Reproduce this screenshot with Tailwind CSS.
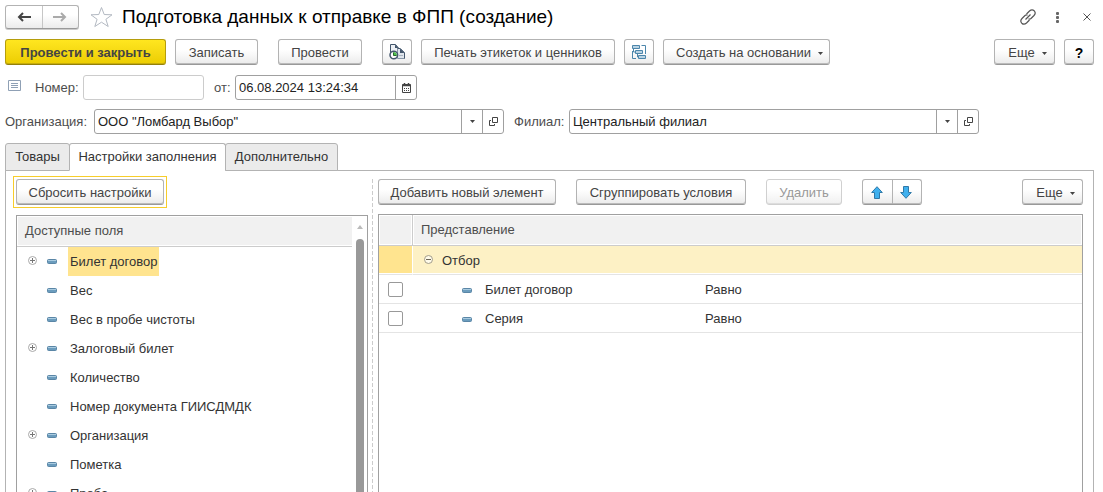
<!DOCTYPE html>
<html lang="ru">
<head>
<meta charset="utf-8">
<title>Подготовка данных к отправке в ФПП (создание)</title>
<script src="https://cdn.jsdelivr.net/npm/@tailwindcss/browser@4"></script>
</head>
<body class="flex h-screen flex-col overflow-hidden bg-white font-['Liberation_Sans',Arial,sans-serif] text-[13px] leading-4 text-[#333]">
<svg class="hidden">
  <defs>
    <symbol id="field" viewBox="0 0 10 5"><rect x=".5" y=".5" width="9" height="4" rx="1" fill="#6b9cbd" stroke="#5a86a6"/><path d="M1 1.500H9" stroke="#a9cbe0"/></symbol>
    <symbol id="plus" viewBox="0 0 9 9"><circle cx="4.500" cy="4.500" r="4" fill="#fff" stroke="#a8a8a8"/><path d="M2 4.500H7M4.500 2V7" stroke="#777"/></symbol>
    <symbol id="minus" viewBox="0 0 9 9"><circle cx="4.500" cy="4.500" r="4" fill="#fffbea" stroke="#a39d8a"/><path d="M2 4.500H7" stroke="#6b6657"/></symbol>
    <symbol id="caret" viewBox="0 0 5 3"><path d="M0 0H5L2.500 3Z" fill="#444"/></symbol>
    <symbol id="open" viewBox="0 0 9 9"><path d="M3.500.5H8.500V5.500H3.500ZM2 3.500H.5V8.500H5.500V7" fill="none" stroke="#444"/></symbol>
  </defs>
</svg>

<header class="flex items-center pt-[5px] pr-3 pl-[5px]">
  <div class="flex h-6 w-[74px] rounded-[3px] border border-[#b3b3b3] border-b-[#999] bg-linear-to-b from-white from-40% to-[#ebebeb] shadow-[0_1px_0_#ccc]">
    <button aria-label="Назад" class="flex flex-1 items-center justify-center border-r border-[#c6c6c6]"><svg width="14" height="10" viewBox="0 0 14 10"><path d="M14 5H2M6 1L2 5L6 9" fill="none" stroke="#444" stroke-width="2"/></svg></button>
    <button aria-label="Вперед" class="flex flex-1 items-center justify-center"><svg width="14" height="10" viewBox="0 0 14 10"><path d="M0 5H12M8 1L12 5L8 9" fill="none" stroke="#aaa" stroke-width="2"/></svg></button>
  </div>
  <button aria-label="Избранное" class="ml-[11px]"><svg width="23" height="22" viewBox="0 0 23 22"><path d="M11.500 1.500L14.200 8.500L22 8.800L15.900 13.300L18.200 20.500L11.500 16.200L4.800 20.500L7.100 13.300L1 8.800L8.800 8.500Z" fill="#fff" stroke="#b3b9c2"/></svg></button>
  <h1 class="ml-[9px] flex-1 text-[19px] leading-6 text-black">Подготовка данных к отправке в ФПП (создание)</h1>
  <button aria-label="Ссылка" class="mr-5"><svg width="16" height="16" viewBox="0 0 16 16"><g fill="none" stroke="#555" stroke-width="1.200"><path d="M6.500 5L9.500 2Q12 -.3 14.200 1.800Q16.300 4 14 6.500L11 9.500Q9.800 10.500 8.500 9.800"/><path d="M9.500 11L6.500 14Q4 16.300 1.800 14.200Q-.3 12 2 9.500L5 6.500Q6.200 5.500 7.500 6.200"/><path d="M5.500 10.500L10.500 5.500"/></g></svg></button>
  <button aria-label="Меню" class="mr-6"><svg width="3" height="11" viewBox="0 0 3 11" fill="#666"><rect width="3" height="3" rx="1"/><rect y="4" width="3" height="3" rx="1"/><rect y="8" width="3" height="3" rx="1"/></svg></button>
  <button aria-label="Закрыть"><svg width="8" height="8" viewBox="0 0 8 8"><path d="M.5.5L7.500 7.500M7.500.5L.5 7.500" stroke="#555" fill="none"/></svg></button>
</header>

<div class="mt-[10px] flex h-[26px] shrink-0 pr-[9px] pl-[5px] text-[#444]">
  <button class="w-[161px] rounded-[3px] border border-[#b59d0c] border-b-[#94800a] bg-linear-to-b from-[#ffe61f] to-[#eccd00] pt-0.5 font-bold shadow-[inset_0_-1px_0_#c7ad0a]">Провести и закрыть</button>
  <button class="ml-[9px] w-[83px] rounded-[3px] border border-[#b3b3b3] border-b-[#999] bg-linear-to-b from-white from-40% to-[#ebebeb] pt-0.5 shadow-[inset_0_-1px_0_#bbb]">Записать</button>
  <button class="ml-5 w-[84px] rounded-[3px] border border-[#b3b3b3] border-b-[#999] bg-linear-to-b from-white from-40% to-[#ebebeb] pt-0.5 shadow-[inset_0_-1px_0_#bbb]">Провести</button>
  <button aria-label="Движения документа" class="ml-5 flex w-[30px] items-center justify-center rounded-[3px] border border-[#b3b3b3] border-b-[#999] bg-linear-to-b from-white from-40% to-[#ebebeb] shadow-[inset_0_-1px_0_#bbb]"><svg width="17" height="16" viewBox="0 0 17 16"><path d="M1.500 11V.5H6.500L9.500 4V12H1.500Z" fill="#eef1f5" stroke="#43566c"/><path d="M6 .5V4H9.500Z" fill="#43566c"/><path d="M8.500 14.500V4.500H11.500L15.500 8.500V14.500Z" fill="#dfe5ec" stroke="#8796a8"/><path d="M8.500 4.500H11L15.500 9V14.500" fill="none" stroke="#43566c"/><path d="M11 4.500V9H15.500Z" fill="#43566c"/><path d="M10 11.500H14" stroke="#a9b4c1"/><circle cx="4.800" cy="11" r="3.800" fill="#fff" stroke="#43566c" stroke-width="1.500"/><path d="M4.500 8V11.500H8A3.300 3.300 0 0 0 4.500 8Z" fill="#4fc04d"/><path d="M4.500 8.500V11.500H7.500" fill="none" stroke="#266b2c"/></svg></button>
  <button class="ml-[9px] w-[194px] rounded-[3px] border border-[#b3b3b3] border-b-[#999] bg-linear-to-b from-white from-40% to-[#ebebeb] pt-0.5 shadow-[inset_0_-1px_0_#bbb]">Печать этикеток и ценников</button>
  <button aria-label="Структура подчиненности" class="ml-[9px] flex w-[30px] items-center justify-center rounded-[3px] border border-[#b3b3b3] border-b-[#999] bg-linear-to-b from-white from-40% to-[#ebebeb] shadow-[inset_0_-1px_0_#bbb]"><svg width="15" height="15" viewBox="0 0 15 15" fill="none" stroke="#4c86ab"><path d="M.5.5H7.500V3.500H.5ZM3.500 5.500H10.500V8.500H3.500ZM6.500 10.500H13.500V13.500H6.500Z" fill="#b9d3e3"/><path d="M1.500 3.500V7H3.500M5.500 8.500V12H6.500M9.500.5H13.500V9M.5 6V13.500H4"/></svg></button>
  <button class="ml-[9px] flex w-[167px] items-center justify-center gap-[7px] rounded-[3px] border border-[#b3b3b3] border-b-[#999] bg-linear-to-b from-white from-40% to-[#ebebeb] pt-0.5 pl-1.5 shadow-[inset_0_-1px_0_#bbb]">Создать на основании<svg width="5" height="3"><use href="#caret"/></svg></button>
  <button class="ml-auto flex w-[61px] items-center justify-center gap-[7px] rounded-[3px] border border-[#b3b3b3] border-b-[#999] bg-linear-to-b from-white from-40% to-[#ebebeb] pt-0.5 pl-1.5 shadow-[inset_0_-1px_0_#bbb]">Еще<svg width="5" height="3"><use href="#caret"/></svg></button>
  <button aria-label="Справка" class="ml-[9px] w-[30px] rounded-[3px] border border-[#b3b3b3] border-b-[#999] bg-linear-to-b from-white from-40% to-[#ebebeb] pt-0.5 text-sm font-bold text-black shadow-[inset_0_-1px_0_#bbb]">?</button>
</div>

<div class="mt-[10px] flex h-[25px] shrink-0 items-center pl-2 text-[#4d4d4d]">
  <svg class="mb-1" width="13" height="11" viewBox="0 0 13 11"><path d="M.5.5H12.500V10.500H.5Z" fill="#fff" stroke="#8fa0b5"/><path d="M3 3.500H10M3 5.500H10M3 7.500H10" stroke="#8fa0b5"/></svg>
  <label for="num" class="ml-[14px] w-12">Номер:</label>
  <input id="num" class="h-full w-[121px] rounded-[3px] border border-[#ccc] px-1">
  <label for="date" class="ml-[10px] w-[21px]">от:</label>
  <div class="flex h-full w-[182px] rounded-[3px] border border-[#a0a0a0]">
    <input id="date" value="06.08.2024 13:24:34" class="min-w-0 flex-1 px-[3px] text-[#222]">
    <button aria-label="Календарь" class="flex w-[21px] items-center justify-center border-l border-[#a0a0a0]"><svg width="9" height="10" viewBox="0 0 9 10"><path d="M.5 1.500H8.500V9.500H.5Z" fill="#fff" stroke="#444"/><path d="M0 2.500H9M2.500 0V2M6.500 0V2" stroke="#444" stroke-width="1.500"/><path d="M2 5.500H7M2 7.500H7" stroke="#444" stroke-dasharray="1 1"/></svg></button>
  </div>
</div>

<div class="mt-[9px] flex h-[25px] shrink-0 items-center pl-[5px] text-[#4d4d4d]">
  <label for="org" class="w-[89px]">Организация:</label>
  <div class="flex h-full w-[410px] rounded-[3px] border border-[#a0a0a0]">
    <input id="org" value="ООО &quot;Ломбард Выбор&quot;" class="min-w-0 flex-1 px-[3px] text-[#222]">
    <button aria-label="Выбрать организацию" class="flex w-[21px] items-center justify-center border-l border-[#a0a0a0]"><svg width="5" height="3"><use href="#caret"/></svg></button>
    <button aria-label="Открыть организацию" class="flex w-[21px] items-center justify-center border-l border-[#a0a0a0]"><svg width="9" height="9"><use href="#open"/></svg></button>
  </div>
  <label for="fil" class="ml-[10px] w-[55px]">Филиал:</label>
  <div class="flex h-full w-[410px] rounded-[3px] border border-[#a0a0a0]">
    <input id="fil" value="Центральный филиал" class="min-w-0 flex-1 px-[3px] text-[#222]">
    <button aria-label="Выбрать филиал" class="flex w-[21px] items-center justify-center border-l border-[#a0a0a0]"><svg width="5" height="3"><use href="#caret"/></svg></button>
    <button aria-label="Открыть филиал" class="flex w-[21px] items-center justify-center border-l border-[#a0a0a0]"><svg width="9" height="9"><use href="#open"/></svg></button>
  </div>
</div>

<div role="tablist" class="z-10 mt-[9px] -mb-px flex h-7 shrink-0 pl-[5px]">
  <button role="tab" class="w-[65px] rounded-t-[3px] border border-[#b3b3b3] bg-[#ebebeb]">Товары</button>
  <button role="tab" aria-selected="true" class="-ml-px w-[157px] rounded-t-[3px] border border-[#b3b3b3] border-b-white bg-white">Настройки заполнения</button>
  <button role="tab" class="-ml-px w-[113px] rounded-t-[3px] border border-[#b3b3b3] bg-[#ebebeb]">Дополнительно</button>
</div>

<main class="mr-[9px] ml-[5px] flex min-h-0 flex-1 border border-b-0 border-[#b3b3b3] pt-[5px] pr-[10px] pl-[7px]">
  <section class="flex w-[355px] shrink-0 flex-col">
    <div class="w-[154px] shrink-0 border border-[#f7cd2b] p-0.5">
      <button class="h-[26px] w-full rounded-[3px] border border-[#b3b3b3] border-b-[#999] bg-linear-to-b from-white from-40% to-[#ebebeb] pt-0.5 text-[#444] shadow-[inset_0_-1px_0_#bbb]">Сбросить настройки</button>
    </div>
    <div class="mt-[7px] ml-[3px] flex min-h-0 flex-1 border border-b-0 border-[#a0a0a0]">
      <div class="flex min-w-0 flex-1 flex-col overflow-hidden">
        <div class="h-[31px] shrink-0 border-b border-[#ccc] pt-px pb-px pl-px"><div class="flex h-full items-center bg-[#f1f1f1] pl-[7px] text-[#4d4d4d]">Доступные поля</div></div>
        <ul role="tree" aria-label="Доступные поля" class="flex flex-col">
          <li role="treeitem" class="flex h-[29px] shrink-0 items-center pl-[11px]"><svg class="mb-[3px]" width="9" height="9"><use href="#plus"/></svg><svg class="ml-[10px]" width="10" height="5"><use href="#field"/></svg><span class="ml-[11px] flex h-full items-center bg-[#ffe48f] px-0.5">Билет договор</span></li>
          <li role="treeitem" class="flex h-[29px] shrink-0 items-center pl-[30px]"><svg width="10" height="5"><use href="#field"/></svg><span class="ml-[13px]">Вес</span></li>
          <li role="treeitem" class="flex h-[29px] shrink-0 items-center pl-[30px]"><svg width="10" height="5"><use href="#field"/></svg><span class="ml-[13px]">Вес в пробе чистоты</span></li>
          <li role="treeitem" class="flex h-[29px] shrink-0 items-center pl-[11px]"><svg class="mb-[3px]" width="9" height="9"><use href="#plus"/></svg><svg class="ml-[10px]" width="10" height="5"><use href="#field"/></svg><span class="ml-[13px]">Залоговый билет</span></li>
          <li role="treeitem" class="flex h-[29px] shrink-0 items-center pl-[30px]"><svg width="10" height="5"><use href="#field"/></svg><span class="ml-[13px]">Количество</span></li>
          <li role="treeitem" class="flex h-[29px] shrink-0 items-center pl-[30px]"><svg width="10" height="5"><use href="#field"/></svg><span class="ml-[13px]">Номер документа ГИИСДМДК</span></li>
          <li role="treeitem" class="flex h-[29px] shrink-0 items-center pl-[11px]"><svg class="mb-[3px]" width="9" height="9"><use href="#plus"/></svg><svg class="ml-[10px]" width="10" height="5"><use href="#field"/></svg><span class="ml-[13px]">Организация</span></li>
          <li role="treeitem" class="flex h-[29px] shrink-0 items-center pl-[30px]"><svg width="10" height="5"><use href="#field"/></svg><span class="ml-[13px]">Пометка</span></li>
          <li role="treeitem" class="flex h-[29px] shrink-0 items-center pl-[11px]"><svg class="mb-[3px]" width="9" height="9"><use href="#plus"/></svg><svg class="ml-[10px]" width="10" height="5"><use href="#field"/></svg><span class="ml-[13px]">Проба</span></li>
        </ul>
      </div>
      <div class="flex w-[15px] flex-col items-center pt-[9px]">
        <svg class="shrink-0" width="6" height="4" viewBox="0 0 6 4"><path d="M3 0L6 4H0Z" fill="#bbb"/></svg>
        <div class="mt-[10px] w-2 flex-1 rounded-t-full bg-[#999]"></div>
      </div>
    </div>
  </section>

  <div class="mt-[3px] ml-1 w-px shrink-0 bg-[repeating-linear-gradient(to_bottom,#ccc_0_4px,transparent_4px_6px)]"></div>

  <section class="ml-[5px] flex min-w-0 flex-1 flex-col pt-[3px]">
    <div class="flex h-[26px] shrink-0 text-[#444]">
      <button class="w-[178px] rounded-[3px] border border-[#b3b3b3] border-b-[#999] bg-linear-to-b from-white from-40% to-[#ebebeb] pt-0.5 shadow-[inset_0_-1px_0_#bbb]">Добавить новый элемент</button>
      <button class="ml-5 w-[170px] rounded-[3px] border border-[#b3b3b3] border-b-[#999] bg-linear-to-b from-white from-40% to-[#ebebeb] pt-0.5 shadow-[inset_0_-1px_0_#bbb]">Сгруппировать условия</button>
      <button disabled class="ml-5 w-[76px] rounded-[3px] border border-[#d0d0d0] bg-linear-to-b from-white from-40% to-[#f0f0f0] pt-0.5 text-[#999] shadow-[inset_0_-1px_0_#ddd]">Удалить</button>
      <div class="ml-5 flex w-[60px] rounded-[3px] border border-[#b3b3b3] border-b-[#999] bg-linear-to-b from-white from-40% to-[#ebebeb] shadow-[inset_0_-1px_0_#bbb]">
        <button aria-label="Вверх" class="flex w-[30px] items-center justify-center border-r border-[#b3b3b3] pr-0.5"><svg width="12" height="13" viewBox="0 0 12 13"><path d="M6 .7L11.300 6.500H8.500V12.500H3.500V6.500H.7Z" fill="#3fb0ee" stroke="#3079a8"/></svg></button>
        <button aria-label="Вниз" class="flex flex-1 items-center justify-center pr-0.5"><svg width="12" height="13" viewBox="0 0 12 13"><path d="M6 12.300L11.300 6.500H8.500V.5H3.500V6.500H.7Z" fill="#3fb0ee" stroke="#3079a8"/></svg></button>
      </div>
      <button class="ml-auto flex w-[61px] items-center justify-center gap-[7px] rounded-[3px] border border-[#b3b3b3] border-b-[#999] bg-linear-to-b from-white from-40% to-[#ebebeb] pt-0.5 pl-1.5 shadow-[inset_0_-1px_0_#bbb]">Еще<svg width="5" height="3"><use href="#caret"/></svg></button>
    </div>
    <div class="mt-[9px] min-h-0 flex-1 border border-b-0 border-[#a0a0a0]">
      <table class="w-full table-fixed border-separate border-spacing-0 text-left">
        <colgroup><col class="w-[34px]"><col class="w-[288px]"><col></colgroup>
        <thead>
          <tr class="h-[31px] text-[#4d4d4d]">
            <th aria-label="Использование" class="border-r border-b border-[#ccc] bg-[#f1f1f1] shadow-[inset_0_0_0_1px_#fff]"></th>
            <th colspan="2" class="border-b border-[#ccc] bg-[#f1f1f1] pl-2 font-normal shadow-[inset_0_0_0_1px_#fff]">Представление</th>
          </tr>
        </thead>
        <tbody>
          <tr class="h-[29px]">
            <td class="border-r border-b border-r-white border-b-[#e4e4e4] bg-[#ffe48f] shadow-[inset_0_-1px_0_#fff]"></td>
            <td colspan="2" class="border-b border-[#e4e4e4] bg-[#fdf1c5] pt-0.5 pl-[11px] shadow-[inset_0_-1px_0_#fff]"><div class="flex items-center gap-[9px]"><svg class="mb-[3px]" width="9" height="9"><use href="#minus"/></svg>Отбор</div></td>
          </tr>
          <tr class="h-[29px]">
            <td class="border-b border-[#e4e4e4] pl-[9px]"><input type="checkbox" aria-label="Билет договор" class="block size-[15px] appearance-none rounded-[2px] border border-[#999] bg-white"></td>
            <td class="border-b border-[#e4e4e4] pt-0.5 pl-[49px]"><div class="flex items-center gap-[13px]"><svg width="10" height="5"><use href="#field"/></svg>Билет договор</div></td>
            <td class="border-b border-[#e4e4e4] pt-0.5 pl-1">Равно</td>
          </tr>
          <tr class="h-[29px]">
            <td class="border-b border-[#e4e4e4] pl-[9px]"><input type="checkbox" aria-label="Серия" class="block size-[15px] appearance-none rounded-[2px] border border-[#999] bg-white"></td>
            <td class="border-b border-[#e4e4e4] pt-0.5 pl-[49px]"><div class="flex items-center gap-[13px]"><svg width="10" height="5"><use href="#field"/></svg>Серия</div></td>
            <td class="border-b border-[#e4e4e4] pt-0.5 pl-1">Равно</td>
          </tr>
        </tbody>
      </table>
    </div>
  </section>
</main>
</body>
</html>
